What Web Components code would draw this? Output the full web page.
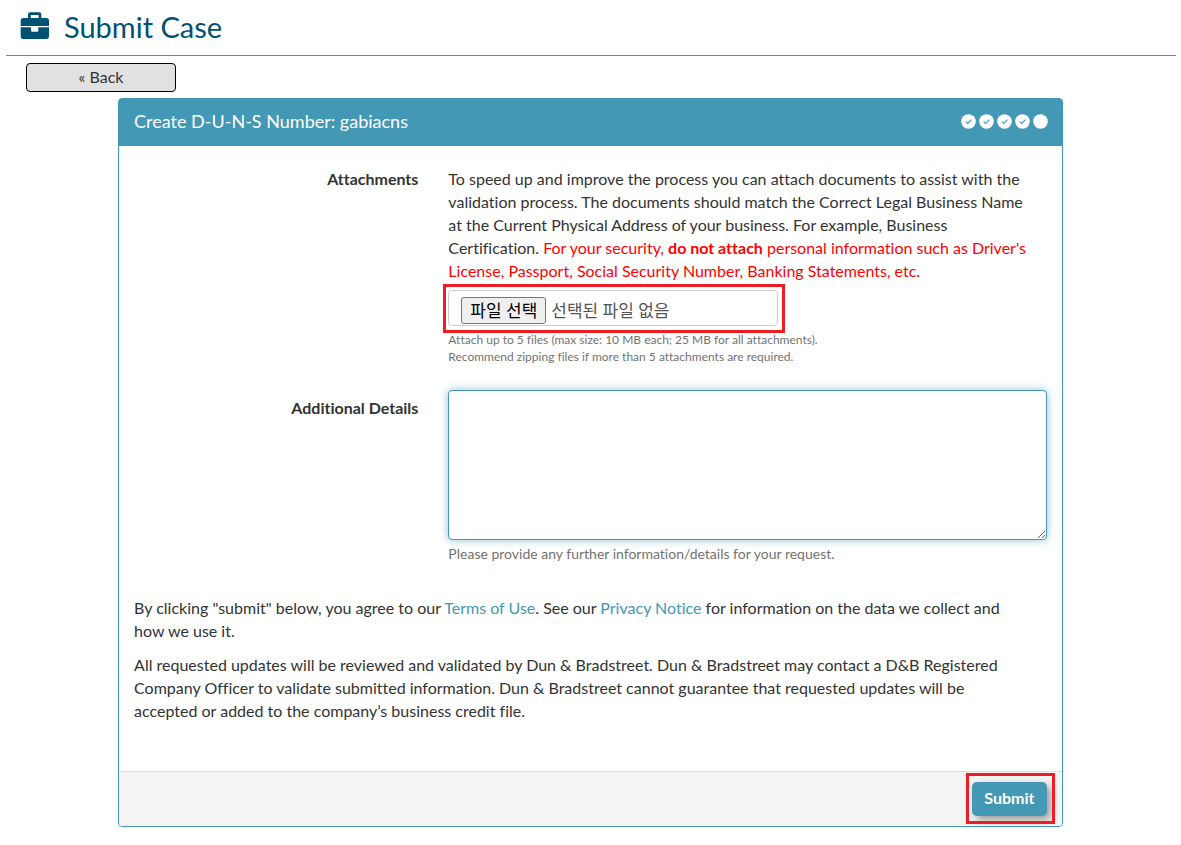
<!DOCTYPE html>
<html lang="en">
<head>
<meta charset="utf-8">
<title>Submit Case</title>
<style>
  body { margin: 0; background: #fff; color: #333; font: 16px/23px Lato, "Noto Sans CJK KR", sans-serif; font-variant-ligatures: no-common-ligatures; }
</style>
</head>
<body>
<case-page></case-page>
<script>
const define = (name, html) => customElements.define(name, class extends HTMLElement {
  constructor() {
    super();
    const t = document.createElement('template');
    t.innerHTML = '<style>*{box-sizing:border-box}</style>' + html;
    this.attachShadow({ mode: 'open' }).append(t.content.cloneNode(true));
  }
});

define('page-title', `
<style>
  :host { display: flex; align-items: center; gap: 15px; height: 56px; margin: 0 5px 0 6px; padding: 0 0 2px 14px; border-bottom: 1px solid #4298b5; color: #005172; }
  h1 { margin: 0; font-size: 29px; line-height: 40px; font-weight: 400; }
  svg { display: block; }
</style>
<svg width="29" height="29" viewBox="0 0 29 29" fill="currentColor" aria-hidden="true">
  <path d="M8 6V2.500A2.200 2.200 0 0 1 10.200.300h8.900a2.200 2.200 0 0 1 2.200 2.200V6h5A2.700 2.700 0 0 1 29 8.700V14H.700V8.700A2.700 2.700 0 0 1 3.400 6zM10.700 6h7.900V3h-7.900z"/>
  <path d="M.700 15.200H11v3.500a1 1 0 0 0 1 1h5.300a1 1 0 0 0 1-1v-3.500H29v9.100a2.700 2.700 0 0 1-2.700 2.700H3.400a2.700 2.700 0 0 1-2.700-2.700z"/>
</svg>
<h1><slot></slot></h1>`);

define('back-button', `
<style>
  :host { display: block; margin: 7px 0 6px 26px; }
  button { display: block; width: 150px; height: 29px; padding: 0 0 2px; border: 1px solid #000; border-radius: 4px; background: #e1e1e1; color: #333; font: inherit; }
</style>
<button type="button"><slot></slot></button>`);

define('step-dots', `
<style>
  :host { display: flex; gap: 3px; }
  svg { display: block; }
</style>
${[1, 1, 1, 1, 0].map(done => `<svg width="15" height="15" viewBox="0 0 15 15" aria-hidden="true"><circle cx="7.5" cy="7.5" r="7.3" fill="#fff"/>${done ? '<path d="M4.700 7.600l2 1.900 3.800-3.800" fill="none" stroke="#4298b5" stroke-width="1.100"/>' : ''}</svg>`).join('')}`);

define('case-card', `
<style>
  :host { display: block; margin: 0 10%; border: 1px solid #4298b5; border-radius: 4px; background: #fff; }
  header { display: flex; align-items: center; justify-content: space-between; height: 47px; padding: 0 14px 3px 15px; background: #4298b5; color: #fff; }
  h2 { margin: 0; font-size: 18px; line-height: 24px; font-weight: 400; }
  .body { padding: 21px 15px 38px; }
  footer { display: flex; justify-content: flex-end; padding: 10px 15px; border-top: 1px solid #ddd; border-radius: 0 0 3px 3px; background: #f4f4f4; }
</style>
<header><h2><slot name="title"></slot></h2><step-dots></step-dots></header>
<div class="body"><slot></slot></div>
<footer><slot name="footer"></slot></footer>`);

define('highlight-box', `
<style>
  :host { display: block; position: relative; }
  :host::after { content: ""; position: absolute; inset: var(--ring, -6px -7px -7px -5px); border: 3px solid #ee1c25; pointer-events: none; }
</style>
<slot></slot>`);

define('submit-button', `
<style>
  :host { display: block; }
  button { display: block; width: 75px; height: 34px; padding: 0 0 3px; border: 0; border-radius: 5px; background: #4298b5; color: #fff; font: inherit; font-weight: 700; box-shadow: 4px 4px 8px #999; }
</style>
<button type="submit"><slot></slot></button>`);

define('attachment-field', `
<style>
  :host { display: grid; grid-template-columns: 1fr 2fr; column-gap: 30px; margin: 0 0 25px -15px; }
  .label { text-align: right; font-weight: 700; }
  p { margin: 0; }
  .warn { color: #f00; }
  highlight-box { width: 55%; margin: 8px 0 5px; }
  .file { position: relative; display: flex; align-items: center; gap: 5px; height: 36px; padding: 4px 12px 0; border: 1px solid #ccc; border-radius: 4px; color: #555; font-size: 17px; }
  .file input { position: absolute; inset: 0; width: 100%; opacity: 0; }
  .pick { padding: 0 8px; height: 27px; border: 1px solid #767676; border-radius: 3px; background: #efefef; color: #000; line-height: 25px; white-space: nowrap; }
  .help { color: #737373; font-size: 12px; line-height: 17px; }
</style>
<label class="label" for="f">Attachments</label>
<div>
  <p>To speed up and improve the process you can attach documents to assist with the<br>validation process. The documents should match the Correct Legal Business Name<br>at the Current Physical Address of your business. For example, Business<br>Certification. <span class="warn">For your security, <b>do not attach</b> personal information such as Driver's<br>License, Passport, Social Security Number, Banking Statements, etc.</span></p>
  <highlight-box><div class="file"><span class="pick">파일 선택</span><span>선택된 파일 없음</span><input id="f" type="file" multiple></div></highlight-box>
  <p class="help">Attach up to 5 files (max size: 10 MB each; 25 MB for all attachments).<br>Recommend zipping files if more than 5 attachments are required.</p>
</div>`);

define('details-field', `
<style>
  :host { display: grid; grid-template-columns: 1fr 2fr; column-gap: 30px; margin: 0 0 32px -15px; }
  label { padding-top: 6px; text-align: right; font-weight: 700; }
  textarea { display: block; width: 100%; height: 150px; padding: 6px 12px; border: 1px solid #4298b5; border-radius: 4px; outline: 0; background: #fff; font: inherit; resize: vertical; box-shadow: 0 0 8px rgba(66,152,181,.6); }
  p { margin: 4px 0 0; color: #737373; font-size: 14px; line-height: 20px; }
</style>
<label for="d">Additional Details</label>
<div><textarea id="d"></textarea><p>Please provide any further information/details for your request.</p></div>`);

define('legal-text', `
<style>
  :host { display: block; }
  p { margin: 0 0 11px; }
  a { color: #4298b5; text-decoration: none; }
</style>
<p>By clicking "submit" below, you agree to our <a href="#terms">Terms of Use</a>. See our <a href="#privacy">Privacy Notice</a> for information on the data we collect and<br>how we use it.</p>
<p>All requested updates will be reviewed and validated by Dun &amp; Bradstreet. Dun &amp; Bradstreet may contact a D&amp;B Registered<br>Company Officer to validate submitted information. Dun &amp; Bradstreet cannot guarantee that requested updates will be<br>accepted or added to the company’s business credit file.</p>`);

define('case-page', `
<style>
  :host { display: block; padding-bottom: 18px; }
  .submit { --ring: -9px -8px -8px -6px; }
</style>
<page-title>Submit Case</page-title>
<back-button>« Back</back-button>
<form>
  <case-card>
    <span slot="title">Create D-U-N-S Number: gabiacns</span>
    <attachment-field></attachment-field>
    <details-field></details-field>
    <legal-text></legal-text>
    <highlight-box class="submit" slot="footer"><submit-button>Submit</submit-button></highlight-box>
  </case-card>
</form>`);
</script>
</body>
</html>
